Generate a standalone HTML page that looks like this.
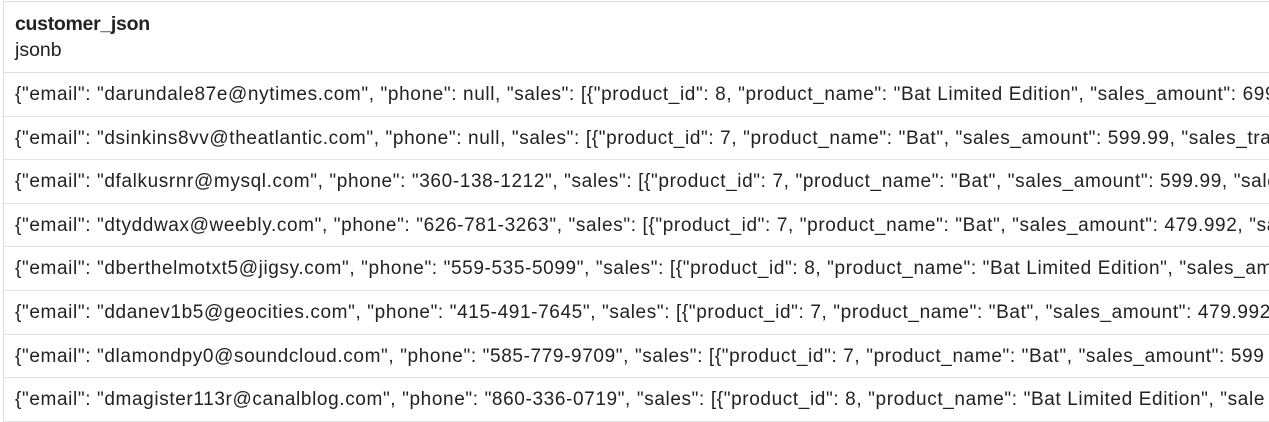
<!DOCTYPE html>
<html><head><style>
body{margin:0;width:1269px;height:421px;overflow:hidden;background:#fff;font-family:"Liberation Sans",sans-serif;color:#222;}
.t{position:absolute;left:3px;top:1px;right:0;border-left:1px solid #ddd;border-top:1px solid #ddd;}
.h{height:71px;border-bottom:1px solid #ddd;padding-left:11px;box-sizing:border-box;}
.h .a{font-weight:bold;font-size:19.5px;padding-top:10px;line-height:24px;letter-spacing:-0.3px}
.h .b{font-size:19.5px;line-height:28px;}
.r{height:43.6px;line-height:43px;border-bottom:1px solid #e3e3e3;box-sizing:border-box;padding-left:11px;font-size:19px;white-space:nowrap;overflow:hidden;letter-spacing:0.62px}
</style></head><body>
<div class="t">
<div class="h"><div class="a">customer_json</div><div class="b">jsonb</div></div>
<div class="r">{"email": "darundale87e@nytimes.com", "phone": null, "sales": [{"product_id": 8, "product_name": "Bat Limited Edition", "sales_amount": 699</div>
<div class="r">{"email": "dsinkins8vv@theatlantic.com", "phone": null, "sales": [{"product_id": 7, "product_name": "Bat", "sales_amount": 599.99, "sales_tra</div>
<div class="r">{"email": "dfalkusrnr@mysql.com", "phone": "360-138-1212", "sales": [{"product_id": 7, "product_name": "Bat", "sales_amount": 599.99, "sale</div>
<div class="r">{"email": "dtyddwax@weebly.com", "phone": "626-781-3263", "sales": [{"product_id": 7, "product_name": "Bat", "sales_amount": 479.992, "sa</div>
<div class="r">{"email": "dberthelmotxt5@jigsy.com", "phone": "559-535-5099", "sales": [{"product_id": 8, "product_name": "Bat Limited Edition", "sales_am</div>
<div class="r">{"email": "ddanev1b5@geocities.com", "phone": "415-491-7645", "sales": [{"product_id": 7, "product_name": "Bat", "sales_amount": 479.992</div>
<div class="r">{"email": "dlamondpy0@soundcloud.com", "phone": "585-779-9709", "sales": [{"product_id": 7, "product_name": "Bat", "sales_amount": 599</div>
<div class="r">{"email": "dmagister113r@canalblog.com", "phone": "860-336-0719", "sales": [{"product_id": 8, "product_name": "Bat Limited Edition", "sale</div>
</div>
</body></html>
